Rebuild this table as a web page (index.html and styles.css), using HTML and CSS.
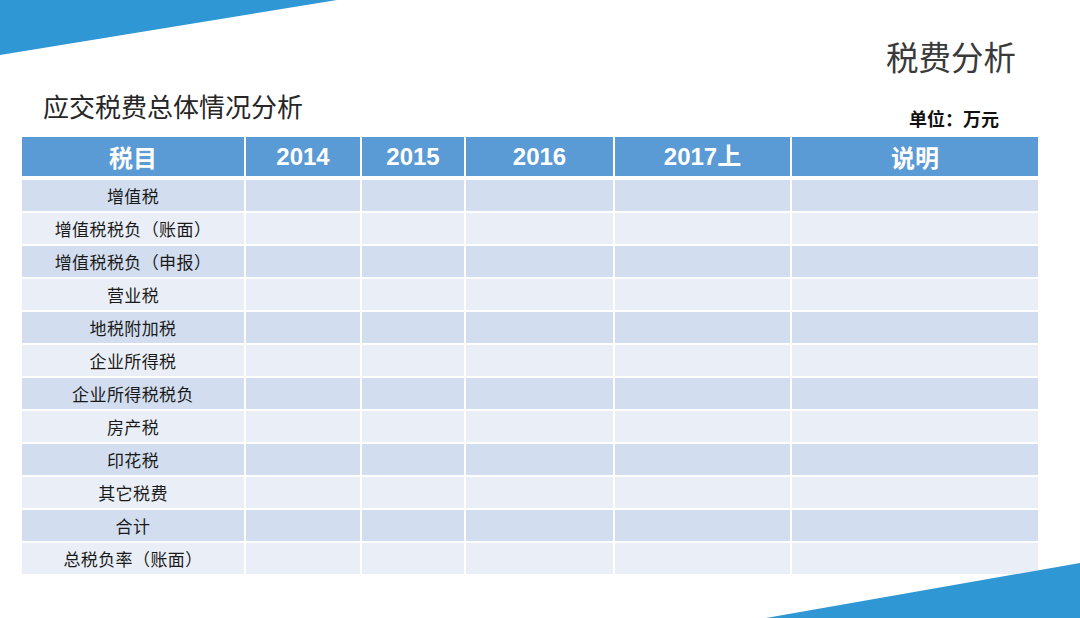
FILE: index.html
```html
<!DOCTYPE html>
<html lang="zh-CN">
<head>
<meta charset="utf-8">
<title>税费分析</title>
<link rel="stylesheet" href="styles.css">
</head>
<body>
<div class="page">
  <svg class="deco deco-top" width="340" height="56" viewBox="0 0 340 56"><polygon points="0,0 337,0 0,55" fill="#2f97d4"/></svg>
  <svg class="deco deco-bottom" width="314" height="56" viewBox="0 0 314 56"><polygon points="0,56 314,1 314,56" fill="#2f97d4"/></svg>

  <div class="main-title">税费分析</div>
  <div class="subrow">
    <div class="sub-title">应交税费总体情况分析</div>
    <div class="unit">单位：万元</div>
  </div>

  <div class="table">
    <div class="th">税目</div>
    <div class="th num">2014</div>
    <div class="th num">2015</div>
    <div class="th num">2016</div>
    <div class="th num">2017上</div>
    <div class="th">说明</div>

    <div class="td odd name">增值税</div><div class="td odd"></div><div class="td odd"></div><div class="td odd"></div><div class="td odd"></div><div class="td odd"></div>
    <div class="td even name">增值税税负（账面）</div><div class="td even"></div><div class="td even"></div><div class="td even"></div><div class="td even"></div><div class="td even"></div>
    <div class="td odd name">增值税税负（申报）</div><div class="td odd"></div><div class="td odd"></div><div class="td odd"></div><div class="td odd"></div><div class="td odd"></div>
    <div class="td even name">营业税</div><div class="td even"></div><div class="td even"></div><div class="td even"></div><div class="td even"></div><div class="td even"></div>
    <div class="td odd name">地税附加税</div><div class="td odd"></div><div class="td odd"></div><div class="td odd"></div><div class="td odd"></div><div class="td odd"></div>
    <div class="td even name">企业所得税</div><div class="td even"></div><div class="td even"></div><div class="td even"></div><div class="td even"></div><div class="td even"></div>
    <div class="td odd name">企业所得税税负</div><div class="td odd"></div><div class="td odd"></div><div class="td odd"></div><div class="td odd"></div><div class="td odd"></div>
    <div class="td even name">房产税</div><div class="td even"></div><div class="td even"></div><div class="td even"></div><div class="td even"></div><div class="td even"></div>
    <div class="td odd name">印花税</div><div class="td odd"></div><div class="td odd"></div><div class="td odd"></div><div class="td odd"></div><div class="td odd"></div>
    <div class="td even name">其它税费</div><div class="td even"></div><div class="td even"></div><div class="td even"></div><div class="td even"></div><div class="td even"></div>
    <div class="td odd name">合计</div><div class="td odd"></div><div class="td odd"></div><div class="td odd"></div><div class="td odd"></div><div class="td odd"></div>
    <div class="td even name">总税负率（账面）</div><div class="td even"></div><div class="td even"></div><div class="td even"></div><div class="td even"></div><div class="td even"></div>
  </div>
</div>
</body>
</html>
```
FILE: styles.css
```css
html, body {
  margin: 0;
  padding: 0;
  background: #ffffff;
}
.page {
  position: relative;
  width: 1080px;
  height: 618px;
  overflow: hidden;
  font-family: "Noto Sans CJK SC", "Noto Sans", sans-serif;
  color: #1a1a1a;
}
.deco {
  position: absolute;
  display: block;
}
.deco-top {
  left: 0;
  top: 0;
}
.deco-bottom {
  right: 0;
  bottom: 0;
}
.main-title {
  margin-top: 36px;
  padding-right: 64px;
  text-align: right;
  font-size: 32.5px;
  line-height: 40px;
  color: #3a3a3a;
}
.subrow {
  display: flex;
  justify-content: space-between;
  align-items: flex-start;
  margin-top: 15px;
  padding-left: 43px;
  padding-right: 81px;
}
.sub-title {
  font-size: 26px;
  line-height: 30px;
  color: #262626;
}
.unit {
  margin-top: 16px;
  font-size: 18px;
  line-height: 22px;
  font-weight: 700;
  color: #111111;
}
.table {
  display: grid;
  grid-template-columns: 222px 114px 102px 147px 175px 246px;
  column-gap: 2px;
  row-gap: 2px;
  width: 1016px;
  margin-top: 8px;
  margin-left: 22px;
}
.th {
  height: 39px;
  margin-bottom: 2px;
  background: #5b9bd5;
  color: #ffffff;
  font-weight: 700;
  font-size: 24px;
  line-height: 39px;
  text-align: center;
}
.th.num {
  font-family: "Liberation Sans", "Noto Sans CJK SC", sans-serif;
  font-size: 24px;
}
.td {
  height: 31px;
  font-size: 17px;
  line-height: 31px;
  letter-spacing: 0.4px;
  text-align: center;
  color: #1a1a1a;
}
.td.odd {
  background: #d2deef;
}
.td.even {
  background: #eaeff7;
}
```
